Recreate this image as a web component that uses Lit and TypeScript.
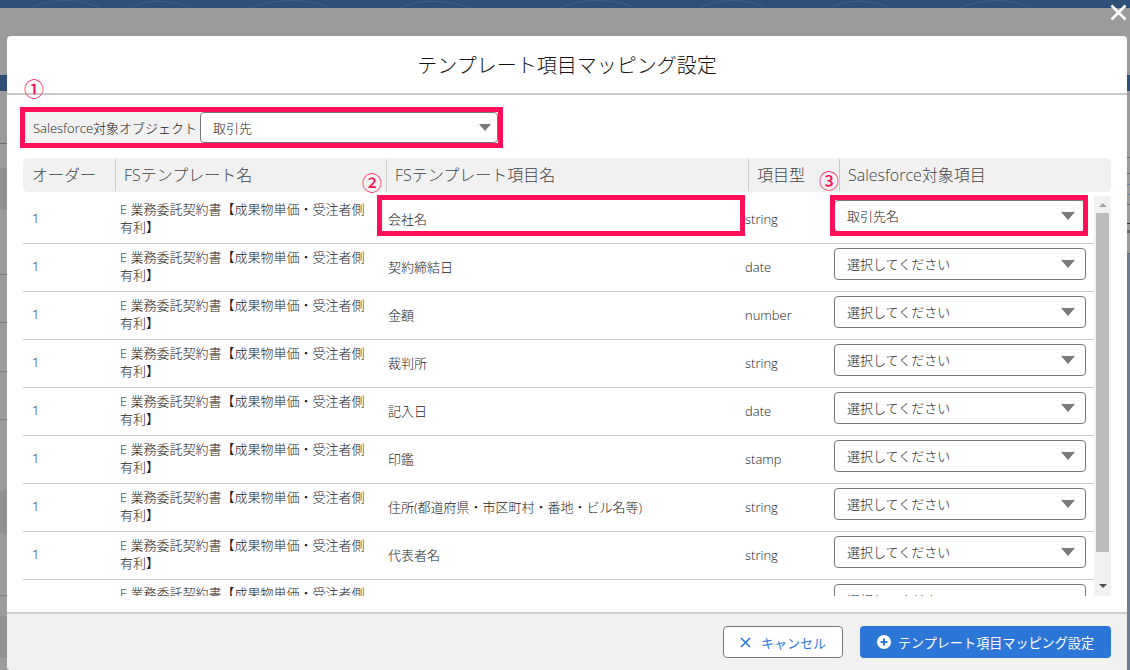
import { LitElement, html, css } from 'lit';
import { customElement } from 'lit/decorators.js';

const TEMPLATE = 'E 業務委託契約書【成果物単価・受注者側有利】';
const ROWS = [
  { name: '会社名', type: 'string', target: '取引先名' },
  { name: '契約締結日', type: 'date', target: '選択してください' },
  { name: '金額', type: 'number', target: '選択してください' },
  { name: '裁判所', type: 'string', target: '選択してください' },
  { name: '記入日', type: 'date', target: '選択してください' },
  { name: '印鑑', type: 'stamp', target: '選択してください' },
  { name: '住所(都道府県・市区町村・番地・ビル名等)', type: 'string', target: '選択してください' },
  { name: '代表者名', type: 'string', target: '選択してください' },
  { name: '', type: '', target: '選択してください' },
];

@customElement('app-root')
export class AppRoot extends LitElement {
  static styles = css`
    :host {
      display: block;
      width: 1130px;
      height: 670px;
      overflow: hidden;
      position: relative;
      color: #222;
      font-family: 'Open Sans', 'Noto Sans CJK JP', sans-serif;
      font-size: 13px;
      font-weight: 300;
      /* dimmed page behind the modal, only its edges stay visible */
      background:
        linear-gradient(#2d4f78, #2d4f78) 0 75px / 100% 16px no-repeat,
        linear-gradient(#6a6a6a, #6a6a6a) 0 143px / 7px 1px no-repeat,
        linear-gradient(#7d7d7d, #7d7d7d) 0 274px / 7px 1px no-repeat,
        linear-gradient(#7d7d7d, #7d7d7d) 0 322px / 7px 1px no-repeat,
        linear-gradient(#7d7d7d, #7d7d7d) 0 371px / 7px 1px no-repeat,
        linear-gradient(#7d7d7d, #7d7d7d) 0 419px / 7px 1px no-repeat,
        linear-gradient(#7d7d7d, #7d7d7d) 0 595px / 7px 1px no-repeat,
        linear-gradient(#919191, #919191) 0 168px / 7px 42px no-repeat,
        linear-gradient(#919191, #919191) 0 491px / 7px 42px no-repeat,
        linear-gradient(#919191, #919191) 0 616px / 7px 42px no-repeat,
        linear-gradient(#6a6a6a, #6a6a6a) 100% 157px / 3px 1px no-repeat,
        linear-gradient(#6a6a6a, #6a6a6a) 100% 173px / 3px 1px no-repeat,
        linear-gradient(#5c7fae, #5c7fae) 100% 184px / 3px 1px no-repeat,
        linear-gradient(#5c7fae, #5c7fae) 100% 194px / 3px 1px no-repeat,
        linear-gradient(#6a6a6a, #6a6a6a) 100% 204px / 3px 1px no-repeat,
        linear-gradient(#333, #333) 100% 223px / 3px 1px no-repeat,
        linear-gradient(#666, #666) 100% 230px / 3px 3px no-repeat,
        linear-gradient(#6a6a6a, #6a6a6a) 100% 253px / 3px 1px no-repeat,
        linear-gradient(#6e7c94, #6e7c94) 100% 254px / 3px 416px no-repeat,
        #9b9b9b;
    }
    .top-band {
      height: 8px;
      background: #2d4f78;
      overflow: hidden;
    }
    .top-band svg {
      display: block;
    }
    .backdrop {
      padding: 28px 3px 0 7px;
    }
    .modal {
      height: 634px;
      display: flex;
      flex-direction: column;
      background: #fff;
      border-radius: 4px 4px 0 4px;
      overflow: hidden;
    }
    .modal-head {
      height: 59px;
      flex: none;
      box-sizing: border-box;
      border-bottom: 2px solid #c9c9c9;
      display: flex;
      align-items: center;
      justify-content: center;
      font-size: 20px;
      color: #111;
    }
    .modal-body {
      flex: 1;
      min-height: 0;
      padding: 17px 16px 0;
      display: flex;
      flex-direction: column;
    }
    .object-row {
      display: flex;
      width: 475px;
      height: 31px;
      flex: none;
    }
    .object-label {
      width: 177px;
      box-sizing: border-box;
      padding-left: 10px;
      background: #f1f1f1;
      display: flex;
      align-items: center;
      white-space: nowrap;
      border-radius: 4px 0 0 4px;
    }
    .select {
      box-sizing: border-box;
      background: #fff;
      border: 1px solid #777;
      border-radius: 4px;
      display: flex;
      align-items: center;
      justify-content: space-between;
      padding: 0 10px 0 12px;
      white-space: nowrap;
      overflow: hidden;
    }
    .object-row .select {
      flex: 1;
      padding-right: 6px;
    }
    .arrow {
      width: 0;
      height: 0;
      border-left: 7px solid transparent;
      border-right: 7px solid transparent;
      border-top: 8px solid #7a7a7a;
    }
    .object-row .arrow {
      border-left-width: 6px;
      border-right-width: 6px;
      border-top-width: 7px;
    }
    .table-head {
      margin-top: 15px;
      flex: none;
      height: 34px;
      display: grid;
      grid-template-columns: 92px 271px 362px 91px 1fr;
      background: #f1f1f1;
      border-radius: 5px;
      font-size: 16px;
      color: #444;
      white-space: nowrap;
    }
    .table-head span {
      display: flex;
      align-items: center;
      padding: 0 0 2px 8px;
      border-left: 1px solid #c9c9c9;
      margin: 1px 0;
    }
    .table-head span:first-child {
      border-left: 0;
      padding-left: 9px;
    }
    .scroll-wrap {
      margin-top: 4px;
      height: 400px;
      display: flex;
      overflow: hidden;
    }
    .rows {
      flex: 1;
      min-width: 0;
    }
    .row {
      height: 48px;
      box-sizing: border-box;
      border-bottom: 1px solid #c9c9c9;
      display: grid;
      grid-template-columns: 97px 260px 365px 89px 1fr;
      align-items: center;
    }
    .order {
      padding: 0 0 3px 9px;
    }
    .tpl {
      line-height: 18px;
      padding: 0 14px 3px 0;
    }
    .name {
      padding: 0 0 2px 8px;
    }
    .type {
      padding-bottom: 2px;
    }
    .row .select {
      height: 32px;
      margin: 0 8px 8px 0;
    }
    .scrollbar {
      width: 17px;
      flex: none;
      background: #f1f1f1;
      display: flex;
      flex-direction: column;
      align-items: center;
    }
    .sb-up,
    .sb-down {
      width: 0;
      height: 0;
      border-left: 4px solid transparent;
      border-right: 4px solid transparent;
    }
    .sb-up {
      margin-top: 7px;
      border-bottom: 4px solid #a3a3a3;
    }
    .thumb {
      width: 13px;
      height: 339px;
      margin-top: 6px;
      background: #bcbcbc;
    }
    .sb-down {
      margin-top: auto;
      margin-bottom: 8px;
      border-top: 4px solid #505050;
    }
    .modal-foot {
      height: 56px;
      flex: none;
      background: #f1f1f1;
      border-top: 2px solid #cfcfcf;
      display: flex;
      align-items: center;
      justify-content: flex-end;
      gap: 17px;
      padding: 0 16px;
    }
    .btn {
      height: 32px;
      box-sizing: border-box;
      border-radius: 4px;
      display: flex;
      align-items: center;
      justify-content: center;
      gap: 10px;
      font-size: 13px;
      font-weight: 400;
      white-space: nowrap;
    }
    .btn svg {
      display: block;
    }
    .cancel {
      width: 120px;
      background: #fff;
      border: 1px solid #777;
      color: #2b78d8;
    }
    .primary {
      width: 251px;
      background: #2b76d6;
      color: #fff;
      gap: 7px;
      font-size: 13.1px;
    }
    .close {
      position: absolute;
      left: 1110px;
      top: 4px;
      display: block;
    }
    .mark {
      position: absolute;
      box-sizing: border-box;
      border: 5px solid #ff0f5a;
    }
    .mark-object {
      left: 20px;
      top: 107px;
      width: 483px;
      height: 41px;
    }
    .mark-name {
      left: 377px;
      top: 195px;
      width: 368px;
      height: 41px;
    }
    .mark-target {
      left: 830px;
      top: 195px;
      width: 258px;
      height: 41px;
    }
    .num {
      position: absolute;
      color: #ff0f5a;
      font-size: 20px;
      font-weight: 500;
      line-height: 24px;
    }
    .num-1 {
      left: 24px;
      top: 78px;
    }
    .num-2 {
      left: 362px;
      top: 172px;
    }
    .num-3 {
      left: 819px;
      top: 170px;
    }
  `;

  render() {
    return html`
      <div class="top-band">
        <svg width="1130" height="8" viewBox="0 0 1130 8" fill="none" stroke="#3f5f88" stroke-width="1">
          <path d="M30 8c20-10 50-10 70 0M130 8c15-9 40-9 60 0M250 8c25-10 60-10 80 0M400 8c18-9 45-9 70 0M560 8c20-10 55-10 75 0M700 8c20-10 45-10 65 0M830 8c15-9 40-9 60 0M960 8c25-10 50-10 70 0" />
        </svg>
      </div>
      <div class="backdrop">
        <div class="modal">
          <div class="modal-head">テンプレート項目マッピング設定</div>
          <div class="modal-body">
            <div class="object-row">
              <div class="object-label">Salesforce対象オブジェクト</div>
              <div class="select"><span>取引先</span><i class="arrow"></i></div>
            </div>
            <div class="table-head">
              <span>オーダー</span><span>FSテンプレート名</span><span>FSテンプレート項目名</span><span>項目型</span><span>Salesforce対象項目</span>
            </div>
            <div class="scroll-wrap">
              <div class="rows">
                ${ROWS.map(
                  r => html`
                    <div class="row">
                      <div class="order">1</div>
                      <div class="tpl">${TEMPLATE}</div>
                      <div class="name">${r.name}</div>
                      <div class="type">${r.type}</div>
                      <div class="select"><span>${r.target}</span><i class="arrow"></i></div>
                    </div>
                  `
                )}
              </div>
              <div class="scrollbar">
                <i class="sb-up"></i>
                <div class="thumb"></div>
                <i class="sb-down"></i>
              </div>
            </div>
          </div>
          <div class="modal-foot">
            <div class="btn cancel">
              <svg width="11" height="11" viewBox="0 0 11 11"><path d="M1 1l9 9M10 1l-9 9" stroke="#2b78d8" stroke-width="1.6" fill="none" /></svg>
              キャンセル
            </div>
            <div class="btn primary">
              <svg width="14" height="14" viewBox="0 0 14 14"><circle cx="7" cy="7" r="7" fill="#fff" /><path d="M7 3.5v7M3.5 7h7" stroke="#2b76d6" stroke-width="2" /></svg>
              テンプレート項目マッピング設定
            </div>
          </div>
        </div>
      </div>

      <svg class="close" width="17" height="17" viewBox="0 0 17 17"><path d="M1.5 1.5l14 14M15.5 1.5l-14 14" stroke="#fff" stroke-width="2.6" fill="none" /></svg>

      <div class="mark mark-object"></div>
      <div class="mark mark-name"></div>
      <div class="mark mark-target"></div>
      <span class="num num-1">①</span>
      <span class="num num-2">②</span>
      <span class="num num-3">③</span>
    `;
  }
}
